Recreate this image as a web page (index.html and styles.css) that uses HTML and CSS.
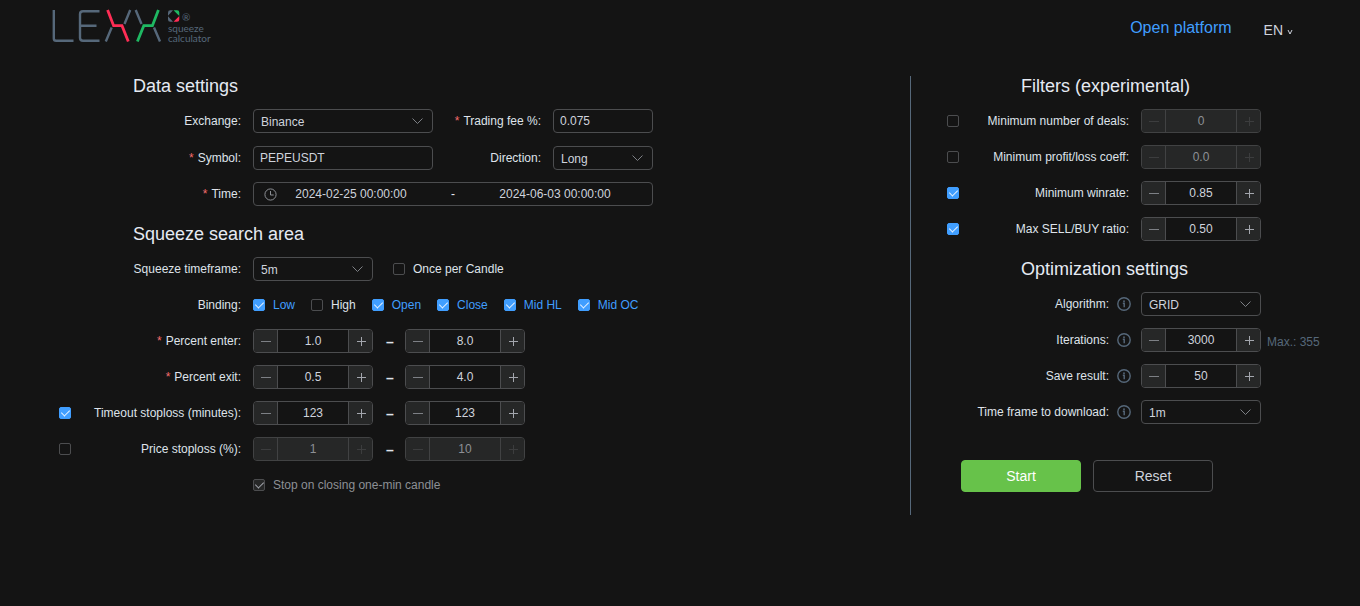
FILE: index.html
```html
<!DOCTYPE html>
<html lang="en">
<head>
<meta charset="utf-8">
<title>LEXX squeeze calculator</title>
<link rel="stylesheet" href="styles.css">
</head>
<body>
<svg class="sprite" aria-hidden="true">
  <symbol id="chevron" viewBox="0 0 14 14"><path d="M1.500 4.500l5 5 5-5" fill="none" stroke="currentColor"/></symbol>
  <symbol id="minus" viewBox="0 0 12 12"><path d="M1 6.500h10" fill="none" stroke="currentColor"/></symbol>
  <symbol id="plus" viewBox="0 0 12 12"><path d="M2 6.500h9M6.500 2v9" fill="none" stroke="currentColor"/></symbol>
  <symbol id="info" viewBox="0 0 14 14"><circle cx="7" cy="7" r="6.200" fill="none" stroke="currentColor" stroke-width="1.400"/><path d="M5.800 6.200H7.200V10.300" fill="none" stroke="currentColor" stroke-width="1.400"/><circle cx="7" cy="4.200" r=".9" fill="currentColor"/></symbol>
</svg>
<header class="header">
  <svg class="logo" width="164" height="36" viewBox="52 9 164 36" role="img" aria-label="LEXX squeeze calculator">
    <g fill="none" stroke-width="2.400">
      <g stroke="#56687a">
        <path d="M53.800 10v28.500q0 2.300 2.300 2.300H73.500"/>
        <path d="M99.500 11.200H83q-3 0-3 3v23.600q0 3 3 3h16.500M80 25.800h16.500"/>
        <path d="M130.200 10l-5.700 14M111.700 27.500l-5.900 14M135.700 10l5.800 14M154 27.500l6 14"/>
      </g>
      <path stroke="#ff2d55" stroke-width="2.800" d="M107.600 10l6 15.700h8.400l6.300 15.800"/>
      <path stroke="#1fb963" stroke-width="2.800" d="M158.400 10l-6 15.700h-8.600l-6.400 15.800"/>
    </g>
    <path fill="#56687a" d="M173 10.300h-2.700a2.300 2.300 0 0 0-2.300 2.300v3.200z"/>
    <path fill="#1fb963" d="M173.500 10.300h3.500a2.300 2.300 0 0 1 2.300 2.300v3.400z"/>
    <path fill="#ff2d55" d="M173.500 21.700h3.500a2.300 2.300 0 0 0 2.300-2.300V16z"/>
    <path fill="#56687a" d="M173 21.700h-2.700a2.300 2.300 0 0 1-2.300-2.300v-3.200z"/>
    <text class="logo-text" x="182" y="21">®</text>
    <text class="logo-text" x="168" y="32">squeeze</text>
    <text class="logo-text" x="168" y="42">calculator</text>
  </svg>
  <nav class="nav">
    <a class="platform" href="#">Open platform</a>
    <button class="lang" type="button">EN <svg width="6" height="6" viewBox="0 0 6 6"><path d="M1 1 3 5 5 1" fill="none" stroke="currentColor"/></svg></button>
  </nav>
</header>

<main class="main">
  <section class="panel">
    <h2 class="title">Data settings</h2>
    <div class="row">
      <label class="label" for="exchange">Exchange:</label>
      <span class="select wide"><select id="exchange"><option>Binance</option></select><svg><use href="#chevron"/></svg></span>
      <label class="label second required" for="fee">Trading fee %:</label>
      <input class="field short" id="fee" value="0.075">
    </div>
    <div class="row tall">
      <label class="label required" for="symbol">Symbol:</label>
      <input class="field wide" id="symbol" value="PEPEUSDT">
      <label class="label second" for="direction">Direction:</label>
      <span class="select short"><select id="direction"><option>Long</option></select><svg><use href="#chevron"/></svg></span>
    </div>
    <div class="row">
      <label class="label required" for="from">Time:</label>
      <div class="range">
        <svg width="13" height="13" viewBox="0 0 13 13"><circle cx="6.500" cy="6.500" r="5.600" fill="none" stroke="currentColor"/><path d="M6.500 3v4h3.200" fill="none" stroke="currentColor"/></svg>
        <input id="from" value="2024-02-25 00:00:00">
        <span class="range-sep">-</span>
        <input id="to" aria-label="End time" value="2024-06-03 00:00:00">
      </div>
    </div>

    <h2 class="title next">Squeeze search area</h2>
    <div class="row">
      <label class="label" for="timeframe">Squeeze timeframe:</label>
      <span class="select"><select id="timeframe"><option>5m</option></select><svg><use href="#chevron"/></svg></span>
      <label class="check once"><input type="checkbox"><span>Once per Candle</span></label>
    </div>
    <div class="row">
      <span class="label" id="binding">Binding:</span>
      <div class="checks" role="group" aria-labelledby="binding">
        <label class="check"><input type="checkbox" checked><span>Low</span></label>
        <label class="check"><input type="checkbox"><span>High</span></label>
        <label class="check"><input type="checkbox" checked><span>Open</span></label>
        <label class="check"><input type="checkbox" checked><span>Close</span></label>
        <label class="check"><input type="checkbox" checked><span>Mid HL</span></label>
        <label class="check"><input type="checkbox" checked><span>Mid OC</span></label>
      </div>
    </div>
    <div class="row">
      <label class="label required" for="enter">Percent enter:</label>
      <div class="number"><button type="button" aria-label="Decrease"><svg><use href="#minus"/></svg></button><input id="enter" value="1.0"><button type="button" aria-label="Increase"><svg><use href="#plus"/></svg></button></div>
      <span class="dash">–</span>
      <div class="number"><button type="button" aria-label="Decrease"><svg><use href="#minus"/></svg></button><input aria-label="Percent enter to" value="8.0"><button type="button" aria-label="Increase"><svg><use href="#plus"/></svg></button></div>
    </div>
    <div class="row">
      <label class="label required" for="exit">Percent exit:</label>
      <div class="number"><button type="button" aria-label="Decrease"><svg><use href="#minus"/></svg></button><input id="exit" value="0.5"><button type="button" aria-label="Increase"><svg><use href="#plus"/></svg></button></div>
      <span class="dash">–</span>
      <div class="number"><button type="button" aria-label="Decrease"><svg><use href="#minus"/></svg></button><input aria-label="Percent exit to" value="4.0"><button type="button" aria-label="Increase"><svg><use href="#plus"/></svg></button></div>
    </div>
    <div class="row">
      <input type="checkbox" aria-label="Use timeout stoploss" checked>
      <label class="label" for="timeout">Timeout stoploss (minutes):</label>
      <div class="number"><button type="button" aria-label="Decrease"><svg><use href="#minus"/></svg></button><input id="timeout" value="123"><button type="button" aria-label="Increase"><svg><use href="#plus"/></svg></button></div>
      <span class="dash">–</span>
      <div class="number"><button type="button" aria-label="Decrease"><svg><use href="#minus"/></svg></button><input aria-label="Timeout stoploss to" value="123"><button type="button" aria-label="Increase"><svg><use href="#plus"/></svg></button></div>
    </div>
    <div class="row">
      <input type="checkbox" aria-label="Use price stoploss">
      <label class="label" for="price">Price stoploss (%):</label>
      <div class="number disabled"><button type="button" aria-label="Decrease" disabled><svg><use href="#minus"/></svg></button><input id="price" value="1" disabled><button type="button" aria-label="Increase" disabled><svg><use href="#plus"/></svg></button></div>
      <span class="dash">–</span>
      <div class="number disabled"><button type="button" aria-label="Decrease" disabled><svg><use href="#minus"/></svg></button><input aria-label="Price stoploss to" value="10" disabled><button type="button" aria-label="Increase" disabled><svg><use href="#plus"/></svg></button></div>
    </div>
    <div class="row">
      <span class="label"></span>
      <label class="check"><input type="checkbox" checked disabled><span>Stop on closing one-min candle</span></label>
    </div>
  </section>

  <section class="panel side">
    <h2 class="title">Filters (experimental)</h2>
    <div class="row">
      <input type="checkbox" aria-label="Filter by number of deals">
      <label class="label" for="deals">Minimum number of deals:</label>
      <div class="number disabled"><button type="button" aria-label="Decrease" disabled><svg><use href="#minus"/></svg></button><input id="deals" value="0" disabled><button type="button" aria-label="Increase" disabled><svg><use href="#plus"/></svg></button></div>
    </div>
    <div class="row">
      <input type="checkbox" aria-label="Filter by profit/loss">
      <label class="label" for="coeff">Minimum profit/loss coeff:</label>
      <div class="number disabled"><button type="button" aria-label="Decrease" disabled><svg><use href="#minus"/></svg></button><input id="coeff" value="0.0" disabled><button type="button" aria-label="Increase" disabled><svg><use href="#plus"/></svg></button></div>
    </div>
    <div class="row">
      <input type="checkbox" aria-label="Filter by winrate" checked>
      <label class="label" for="winrate">Minimum winrate:</label>
      <div class="number"><button type="button" aria-label="Decrease"><svg><use href="#minus"/></svg></button><input id="winrate" value="0.85"><button type="button" aria-label="Increase"><svg><use href="#plus"/></svg></button></div>
    </div>
    <div class="row">
      <input type="checkbox" aria-label="Filter by ratio" checked>
      <label class="label" for="ratio">Max SELL/BUY ratio:</label>
      <div class="number"><button type="button" aria-label="Decrease"><svg><use href="#minus"/></svg></button><input id="ratio" value="0.50"><button type="button" aria-label="Increase"><svg><use href="#plus"/></svg></button></div>
    </div>

    <h2 class="title next">Optimization settings</h2>
    <div class="row">
      <label class="label with-info" for="algorithm">Algorithm:<svg class="info"><use href="#info"/></svg></label>
      <span class="select"><select id="algorithm"><option>GRID</option></select><svg><use href="#chevron"/></svg></span>
    </div>
    <div class="row">
      <label class="label with-info" for="iterations">Iterations:<svg class="info"><use href="#info"/></svg></label>
      <div class="number"><button type="button" aria-label="Decrease"><svg><use href="#minus"/></svg></button><input id="iterations" value="3000"><button type="button" aria-label="Increase"><svg><use href="#plus"/></svg></button></div>
      <span class="hint">Max.: 355</span>
    </div>
    <div class="row">
      <label class="label with-info" for="save">Save result:<svg class="info"><use href="#info"/></svg></label>
      <div class="number"><button type="button" aria-label="Decrease"><svg><use href="#minus"/></svg></button><input id="save" value="50"><button type="button" aria-label="Increase"><svg><use href="#plus"/></svg></button></div>
    </div>
    <div class="row">
      <label class="label with-info" for="download">Time frame to download:<svg class="info"><use href="#info"/></svg></label>
      <span class="select"><select id="download"><option>1m</option></select><svg><use href="#chevron"/></svg></span>
    </div>
    <div class="actions">
      <button class="btn start" type="button">Start</button>
      <button class="btn" type="button">Reset</button>
    </div>
  </section>
</main>
</body>
</html>
```
FILE: styles.css
```css
* {
  box-sizing: border-box;
}

body {
  margin: 0;
  background: #141414;
  color: #dfe3ea;
  font: 12px/24px "Liberation Sans", Arial, sans-serif;
}

input,
select,
button {
  margin: 0;
  font: inherit;
  color: #cfd3dc;
}

.sprite {
  display: none;
}

.header {
  display: flex;
  align-items: flex-start;
  justify-content: space-between;
  padding: 9px 67px 0 52px;
  height: 76px;
}

.logo {
  display: block;
}

.logo-text {
  fill: #56687a;
  font: 10px Lato, sans-serif;
}

.nav {
  display: flex;
  gap: 32px;
  padding-top: 7px;
}

.platform {
  color: #409eff;
  font-size: 16px;
  text-decoration: none;
}

.lang {
  display: flex;
  align-items: center;
  gap: 4px;
  margin-top: 2px;
  padding: 0;
  border: 0;
  background: none;
  font-size: 14px;
}

.lang svg {
  margin-top: 4px;
}

.main {
  display: grid;
  grid-template-columns: 91fr 45fr;
}

.panel {
  display: flex;
  flex-direction: column;
  gap: 12px;
  padding: 0 0 18px 59px;
}

.side {
  padding-left: 36px;
  border-left: 1px solid #56687a;
}

.title {
  margin: 0 0 1px 74px;
  color: #e5eaf3;
  font-size: 18px;
  font-weight: 400;
  line-height: 20px;
}

.next {
  margin-top: 6px;
}

.row {
  display: flex;
  align-items: center;
  height: 24px;
}

.tall {
  height: 25px;
}

.label {
  width: 182px;
  margin-right: 12px;
  text-align: right;
  white-space: nowrap;
}

input[type="checkbox"] + .label {
  width: 170px;
}

.label.second {
  width: 108px;
}

.required::before {
  content: "*";
  margin-right: 4px;
  color: #f56c6c;
}

.with-info {
  display: flex;
  align-items: center;
  justify-content: flex-end;
  gap: 8px;
  width: 184px;
  margin-right: 10px;
}

.info {
  width: 14px;
  height: 14px;
  color: #56687a;
}

.field,
.select select,
.range,
.number {
  height: 24px;
  border: 1px solid #4c4d4f;
  border-radius: 4px;
  background: transparent;
}

.field {
  padding: 0 6px;
}

.select {
  position: relative;
  display: flex;
  width: 120px;
}

.select select {
  width: 100%;
  padding: 0 7px 2px;
  appearance: none;
}

.select svg {
  position: absolute;
  right: 8px;
  top: 5px;
  width: 14px;
  height: 14px;
  color: #7d8085;
  pointer-events: none;
}

.select.wide,
.wide {
  width: 180px;
}

.select.short,
.short {
  width: 100px;
}

.range {
  display: flex;
  align-items: center;
  width: 400px;
  padding: 0 23px 0 10px;
  color: #8d9095;
}

.range input {
  flex: 1;
  min-width: 0;
  padding: 0;
  border: 0;
  background: none;
  text-align: center;
}

.range-sep {
  width: 56px;
  color: #e5eaf3;
  text-align: center;
}

input[type="checkbox"] {
  position: relative;
  flex: none;
  width: 12px;
  height: 12px;
  border: 1px solid #4c4d4f;
  border-radius: 2px;
  appearance: none;
}

input[type="checkbox"]:checked {
  border-color: #409eff;
  background: #409eff;
}

input[type="checkbox"]:checked::after {
  content: "";
  position: absolute;
  left: 3px;
  top: 0;
  width: 4px;
  height: 7px;
  border: solid #e6f2ff;
  border-width: 0 1px 1px 0;
  transform: rotate(45deg);
}

input[type="checkbox"]:disabled {
  border-color: #4c4d4f;
  background: #262727;
}

input[type="checkbox"]:disabled::after {
  border-color: #a3a6ad;
}

.checks {
  display: flex;
  gap: 16px;
}

.check {
  display: flex;
  align-items: center;
  gap: 8px;
}

.once {
  margin-left: 20px;
}

input:checked + span {
  color: #409eff;
}

input:disabled + span {
  color: #8d9095;
}

.number {
  display: flex;
  width: 120px;
  overflow: hidden;
}

.number input {
  flex: 1;
  min-width: 0;
  padding: 0;
  border: 0;
  background: none;
  text-align: center;
}

.number button {
  display: flex;
  align-items: center;
  justify-content: center;
  width: 24px;
  padding: 0;
  border: solid #4c4d4f;
  border-width: 0 1px 0 0;
  background: #262727;
  color: #7d8085;
}

.number button:last-child {
  border-width: 0 0 0 1px;
  color: #a3a6ad;
}

.number svg {
  width: 12px;
  height: 12px;
}

.number.disabled,
.disabled button,
.disabled button:last-child {
  border-color: #414243;
  background: #262727;
  color: #3c3d3e;
}

.disabled input {
  color: #8d9095;
}

.dash {
  width: 32px;
  padding: 2px 0 0 2px;
  font-size: 14px;
  font-weight: 700;
  text-align: center;
}

.hint {
  padding: 4px 0 0 6px;
  color: #56687a;
}

.actions {
  display: flex;
  gap: 12px;
  margin: 24px 0 0 14px;
}

.btn {
  width: 120px;
  height: 32px;
  border: 1px solid #4c4d4f;
  border-radius: 4px;
  background: transparent;
  font-size: 14px;
}

.start {
  border-color: #67c24a;
  background: #67c24a;
  color: #fff;
}
```
